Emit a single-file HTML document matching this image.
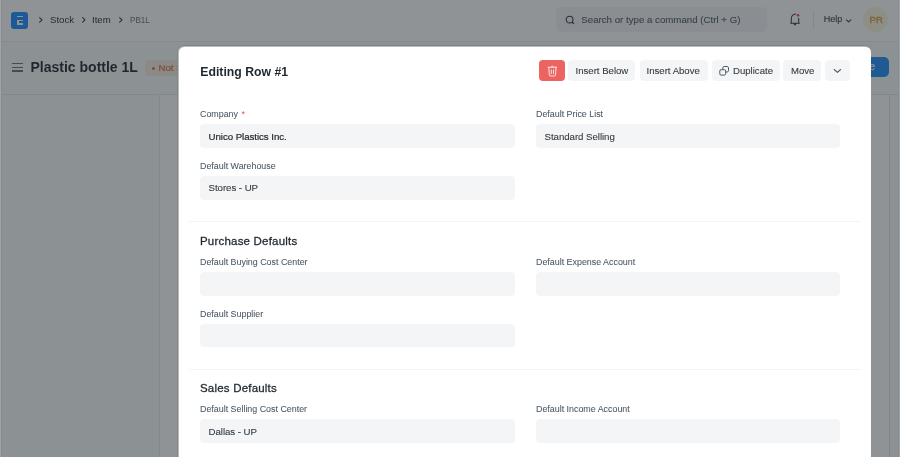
<!DOCTYPE html>
<html>
<head>
<meta charset="utf-8">
<style>
html,body{-webkit-font-smoothing:antialiased;margin:0;padding:0;width:900px;height:457px;overflow:hidden;background:#F9FAFA;font-family:"Liberation Sans",sans-serif;}
.a{position:absolute;}
.t{position:absolute;line-height:1;white-space:nowrap;}
#bg{will-change:transform;position:absolute;left:0;top:0;width:900px;height:457px;overflow:hidden;}
#overlay{position:absolute;left:0;top:0;width:900px;height:457px;background:rgba(31,39,46,0.5);}
#modal{will-change:transform;position:absolute;left:179px;top:47px;width:692px;height:430px;background:#fff;border-radius:5.5px;}
#mring1{position:absolute;left:177px;top:45px;width:694px;height:430px;background:rgb(130,134,138);border-radius:7px;}
#mring2{position:absolute;left:178px;top:46px;width:693px;height:430px;background:rgb(185,188,191);border-radius:6.2px;}
.btn{position:absolute;top:14px;height:20.5px;background:#F4F5F6;border-radius:4px;}
.lbl{position:absolute;font-size:8.9px;line-height:1;color:#4C5A67;-webkit-text-stroke:0.07px #4C5A67;white-space:nowrap;}
.inp{position:absolute;height:23.5px;background:#F4F5F6;border-radius:4px;}
.val{position:absolute;font-size:9.7px;letter-spacing:-0.05px;line-height:1;color:#333C44;-webkit-text-stroke:0.1px #333C44;white-space:nowrap;}
.hd{position:absolute;font-size:11.5px;line-height:1;font-weight:normal;-webkit-text-stroke:0.28px #1F272E;letter-spacing:0.2px;color:#1F272E;white-space:nowrap;}
</style>
</head>
<body>
<div id="bg">
  <!-- navbar -->
  <div class="a" style="left:0;top:0;width:900px;height:41px;background:#fff;border-bottom:1px solid #EBEEF0;"></div>
  <!-- logo -->
  <div class="a" style="left:11px;top:12px;width:17px;height:17px;background:#1A8BFF;border-radius:3px;"></div>
  <div class="a" style="left:17px;top:16px;width:5.5px;height:1.4px;background:#fff;"></div>
  <div class="a" style="left:17px;top:20px;width:5.5px;height:1.4px;background:#fff;"></div>
  <div class="a" style="left:17px;top:20px;width:1.6px;height:4.6px;background:#fff;"></div>
  <div class="a" style="left:17px;top:23.2px;width:5.5px;height:1.4px;background:#fff;"></div>
  <!-- breadcrumbs -->
  <svg class="a" style="left:37px;top:15px" width="8" height="10" viewBox="0 0 8 10"><path d="M2.6 2.6 L5 4.85 L2.6 7.1" fill="none" stroke="#333C44" stroke-width="1.15" stroke-linecap="round" stroke-linejoin="round"/></svg>
  <div class="t" style="left:50px;top:14.9px;font-size:9.6px;color:#1F272E;">Stock</div>
  <svg class="a" style="left:80px;top:15px" width="8" height="10" viewBox="0 0 8 10"><path d="M2.6 2.6 L5 4.85 L2.6 7.1" fill="none" stroke="#333C44" stroke-width="1.15" stroke-linecap="round" stroke-linejoin="round"/></svg>
  <div class="t" style="left:92px;top:14.9px;font-size:9.6px;color:#1F272E;">Item</div>
  <svg class="a" style="left:117px;top:15px" width="8" height="10" viewBox="0 0 8 10"><path d="M2.6 2.6 L5 4.85 L2.6 7.1" fill="none" stroke="#333C44" stroke-width="1.15" stroke-linecap="round" stroke-linejoin="round"/></svg>
  <div class="t" style="left:130px;top:14.9px;font-size:9.6px;transform:scaleX(0.84);transform-origin:0 0;color:#687178;">PB1L</div>
  <!-- search -->
  <div class="a" style="left:556px;top:7px;width:211px;height:25px;background:#F4F5F6;border-radius:5px;"></div>
  <svg class="a" style="left:564px;top:14px" width="12" height="12" viewBox="0 0 12 12"><circle cx="5.6" cy="5.6" r="3.4" fill="none" stroke="#333C44" stroke-width="1.1"/><path d="M8 8 L10 10" stroke="#333C44" stroke-width="1.1"/></svg>
  <div class="t" style="left:581.3px;top:15.0px;font-size:9.7px;color:#4C5A67;-webkit-text-stroke:0.1px #4C5A67;">Search or type a command (Ctrl + G)</div>
  <!-- bell -->
  <svg class="a" style="left:788px;top:12px" width="14" height="15" viewBox="0 0 14 15"><path d="M3.3 11 V7.2 C3.3 4.6 5 2.4 7.6 2.1 M10.7 6.2 V11 M2.6 11.2 H11.4 M5.7 11.5 L7 12.9 L8.3 11.5" fill="none" stroke="#333C44" stroke-width="1.05" stroke-linecap="round" stroke-linejoin="round"/><circle cx="10" cy="3.3" r="1.35" fill="#E24C4C"/></svg>
  <div class="a" style="left:813px;top:11px;width:1px;height:17px;background:#E2E6E9;"></div>
  <div class="t" style="left:823.8px;top:15.4px;font-size:9px;color:#333C44;-webkit-text-stroke:0.12px #333C44;">Help</div>
  <svg class="a" style="left:845px;top:17.6px" width="7" height="6" viewBox="0 0 7 6"><path d="M1.4 1.8 L3.6 3.9 L5.8 1.8" fill="none" stroke="#333C44" stroke-width="1.05" stroke-linecap="round" stroke-linejoin="round"/></svg>
  <div class="a" style="left:863.3px;top:7px;width:25px;height:25px;border-radius:50%;background:#FBF5DC;"></div>
  <div class="t" style="left:866.2px;top:15.2px;width:20px;text-align:center;font-size:9.6px;font-weight:normal;-webkit-text-stroke:0.3px #D39A32;color:#D39A32;">PR</div>
  <!-- page head -->
  <div class="a" style="left:0;top:94px;width:900px;height:1px;background:#E2E6E9;"></div>
  <div class="a" style="left:159px;top:95px;width:1px;height:362px;background:#E2E6E9;"></div>
  <div class="a" style="left:160px;top:95px;width:729px;height:362px;background:#fff;"></div>
  <div class="a" style="left:889px;top:95px;width:1px;height:362px;background:#E2E6E9;"></div>
  <div class="a" style="left:12.3px;top:62.85px;width:10.6px;height:1.5px;background:#687178;"></div>
  <div class="a" style="left:12.3px;top:66.55px;width:10.6px;height:1.5px;background:#687178;"></div>
  <div class="a" style="left:12.3px;top:70.15px;width:10.6px;height:1.5px;background:#687178;"></div>
  <div class="t" style="left:30.5px;top:59.7px;font-size:14px;font-weight:bold;color:#1F272E;">Plastic bottle 1L</div>
  <div class="a" style="left:145px;top:60px;width:80px;height:16px;border-radius:4px;background:#F8ECE3;"></div>
  <div class="a" style="left:151.7px;top:66.5px;width:3px;height:3px;border-radius:50%;background:#D9733C;"></div>
  <div class="t" style="left:158.5px;top:62.8px;font-size:9.6px;color:#D9733C;-webkit-text-stroke:0.2px #D9733C;">Not Saved</div>
  <div class="a" style="left:820px;top:57.3px;width:69px;height:19.7px;border-radius:5px;background:#1E8CF8;"></div>
  <div class="t" style="left:852.4px;top:62.2px;font-size:10px;color:#fff;-webkit-text-stroke:0.25px #fff;">Save</div>
  <!-- frame lines -->
</div>
<div id="overlay"></div>
<div class="a" style="left:0;top:0;width:1px;height:457px;background:rgb(160,164,168);"></div>
<div class="a" style="left:1px;top:0;width:1px;height:457px;background:rgb(136,140,144);"></div>
<div class="a" style="left:899px;top:0;width:1px;height:457px;background:rgb(160,164,168);"></div>
<div class="a" style="left:898px;top:0;width:1px;height:457px;background:rgb(136,140,144);"></div>


<div id="mring1"></div><div id="mring2"></div>
<div id="modal"><div style="position:absolute;left:0;top:-1px;">
  <div class="t" style="left:21.3px;top:19.5px;font-size:12.25px;font-weight:bold;color:#1F272E;">Editing Row #1</div>
  <!-- buttons (modal-relative: x-179, y-46) -->
  <div class="btn" style="left:360px;width:26px;background:#EC6461;"></div>
  <svg class="a" style="left:367.2px;top:18.4px" width="14" height="14" viewBox="0 0 14 14"><path d="M2.2 3.2 H10.6 M5.2 3 C5.3 2.5 5.6 2.4 6.4 2.4 C7.2 2.4 7.5 2.5 7.6 3 M2.8 3.4 L3.3 11 C3.35 11.7 3.8 12 4.4 12 H8.4 C9 12 9.45 11.7 9.5 11 L10 3.4 M5.3 6 V9.6 M7.5 6 V9.6" fill="none" stroke="#fff" stroke-width="0.8" stroke-linecap="round"/></svg>
  <div class="btn" style="left:389.2px;width:66.8px;"></div>
  <div class="t" style="left:396.5px;top:19.8px;font-size:9.6px;letter-spacing:0px;color:#333C44;-webkit-text-stroke:0.1px #333C44;">Insert Below</div>
  <div class="btn" style="left:460.5px;width:68.5px;"></div>
  <div class="t" style="left:467.5px;top:19.8px;font-size:9.6px;letter-spacing:0px;color:#333C44;-webkit-text-stroke:0.1px #333C44;">Insert Above</div>
  <div class="btn" style="left:532.5px;width:68px;"></div>
  <svg class="a" style="left:539px;top:19px" width="12" height="12" viewBox="0 0 12 12"><rect x="1.8" y="4.7" width="5.9" height="5.4" rx="1.3" fill="none" stroke="#4C5A67" stroke-width="1"/><path d="M4.8 4.6 V2.8 C4.8 2 5.3 1.5 6.1 1.5 H9.2 C10 1.5 10.5 2 10.5 2.8 V5.7 C10.5 6.5 10 7 9.2 7 H7.8" fill="none" stroke="#4C5A67" stroke-width="1"/></svg>
  <div class="t" style="left:554px;top:19.8px;font-size:9.6px;letter-spacing:0px;color:#333C44;-webkit-text-stroke:0.1px #333C44;">Duplicate</div>
  <div class="btn" style="left:604px;width:38px;"></div>
  <div class="t" style="left:612px;top:19.8px;font-size:9.6px;letter-spacing:0px;color:#333C44;-webkit-text-stroke:0.1px #333C44;">Move</div>
  <div class="btn" style="left:646px;width:25px;"></div>
  <svg class="a" style="left:653px;top:20px" width="11" height="9" viewBox="0 0 11 9"><path d="M2.2 3.5 L5.4 6.4 L8.6 3.5" fill="none" stroke="#4C5A67" stroke-width="1.1" stroke-linecap="round" stroke-linejoin="round"/></svg>

  <!-- form -->
  <div class="lbl" style="left:21px;top:64px;">Company <span style="color:#E24C4C;margin-left:1px;-webkit-text-stroke:0">*</span></div>
  <div class="inp" style="left:21px;top:78px;width:314.5px;"></div>
  <div class="val" style="left:29.5px;top:85.8px;-webkit-text-stroke:0.2px #1F272E;color:#1F272E;">Unico Plastics Inc.</div>
  <div class="lbl" style="left:357px;top:64px;">Default Price List</div>
  <div class="inp" style="left:357px;top:78px;width:303.5px;"></div>
  <div class="val" style="left:365.5px;top:85.8px;">Standard Selling</div>
  <div class="lbl" style="left:21px;top:116px;">Default Warehouse</div>
  <div class="inp" style="left:21px;top:130px;width:314.5px;"></div>
  <div class="val" style="left:29.5px;top:136.8px;">Stores - UP</div>

  <div class="a" style="left:10px;top:175px;width:672px;height:1px;background:#F3F4F5;"></div>
  <div class="hd" style="left:21px;top:189.5px;">Purchase Defaults</div>
  <div class="lbl" style="left:21px;top:211.5px;">Default Buying Cost Center</div>
  <div class="inp" style="left:21px;top:226px;width:314.5px;"></div>
  <div class="lbl" style="left:357px;top:211.5px;">Default Expense Account</div>
  <div class="inp" style="left:357px;top:226px;width:303.5px;"></div>
  <div class="lbl" style="left:21px;top:263.5px;">Default Supplier</div>
  <div class="inp" style="left:21px;top:277.5px;width:314.5px;"></div>

  <div class="a" style="left:10px;top:322.5px;width:672px;height:1px;background:#F3F4F5;"></div>
  <div class="hd" style="left:21px;top:337px;">Sales Defaults</div>
  <div class="lbl" style="left:21px;top:359px;">Default Selling Cost Center</div>
  <div class="inp" style="left:21px;top:373px;width:314.5px;"></div>
  <div class="val" style="left:29.5px;top:380.8px;">Dallas - UP</div>
  <div class="lbl" style="left:357px;top:359px;">Default Income Account</div>
  <div class="inp" style="left:357px;top:373px;width:303.5px;"></div>
</div></div>
</body>
</html>
